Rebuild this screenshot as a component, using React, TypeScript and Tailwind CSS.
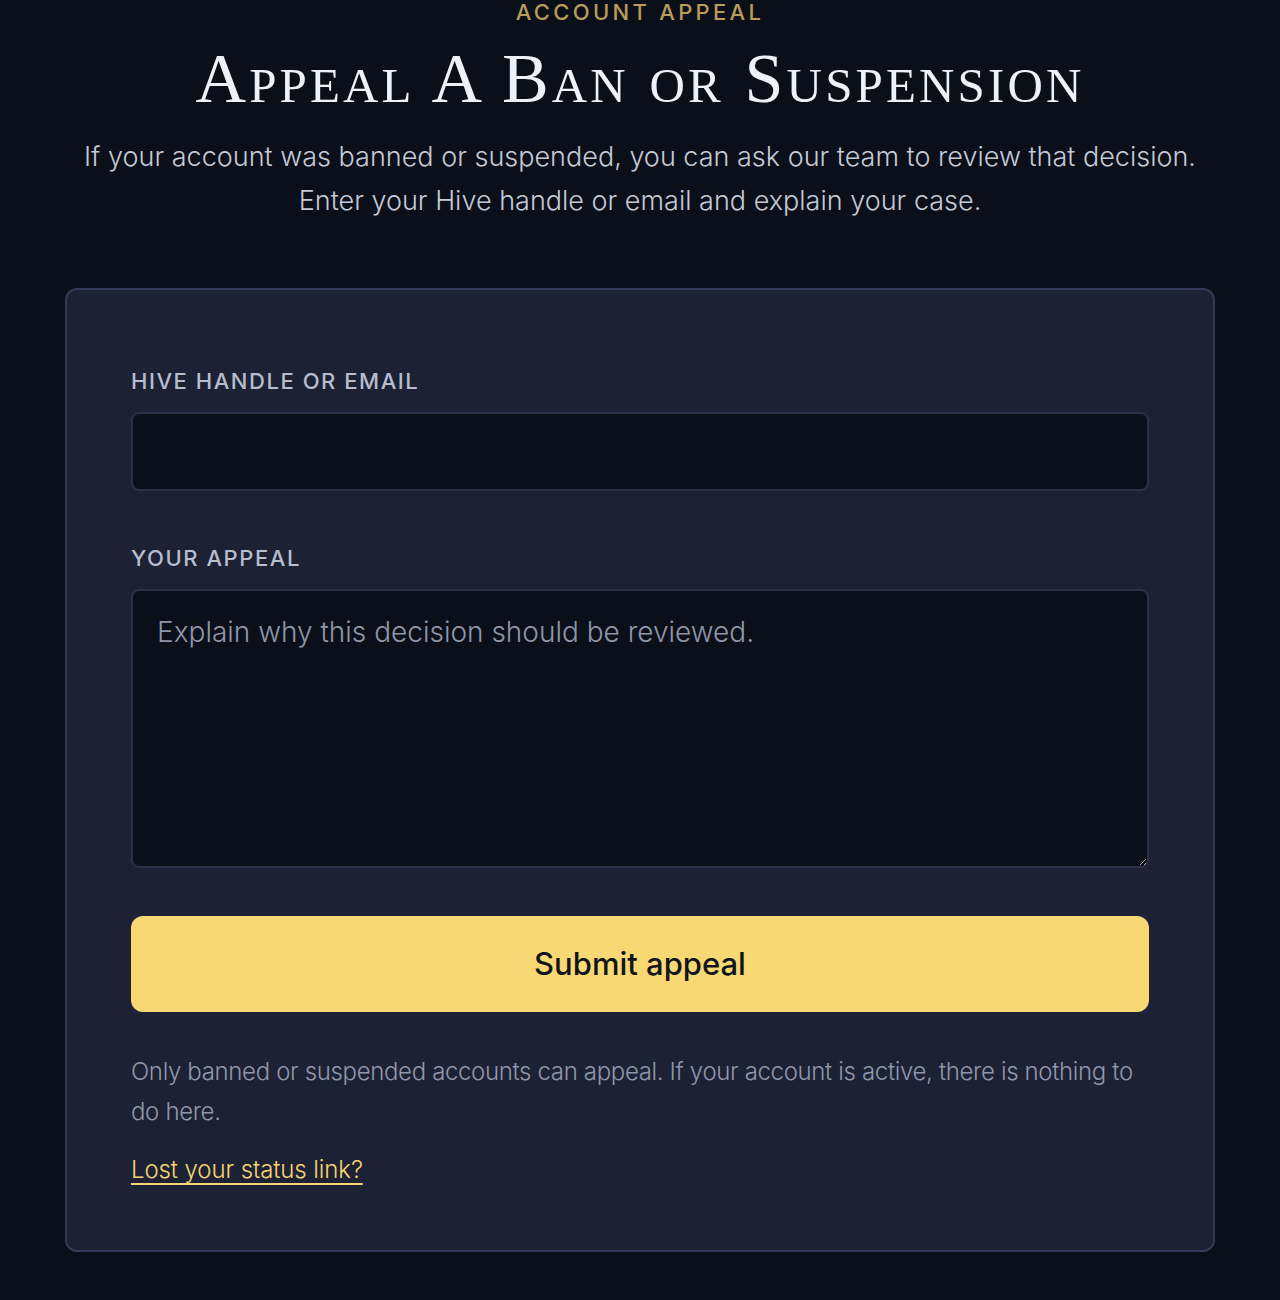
import { useState } from 'react'

export default function App() {
  const [handle, setHandle] = useState('')
  const [appeal, setAppeal] = useState('')

  return (
    <div className="min-h-[1300px] bg-[#0b0f19] font-['Inter',sans-serif] text-[#e6e9f2]">
      <div className="mx-auto flex w-[1150px] flex-col items-center">
        {/* Header */}
        <p className="-mt-[2px] text-[22px] font-medium leading-[28px] tracking-[0.15em] text-[#b89c5a]">
          ACCOUNT APPEAL
        </p>
        <h1 className="mt-[18px] font-['Liberation_Serif',serif] text-[70px] leading-[70px] tracking-[0.045em] text-[#eef1f8] [font-variant:small-caps]">
          Appeal A Ban or Suspension
        </h1>
        <p className="mt-[21px] w-[1160px] text-center text-[27px] font-light leading-[44px] text-[#c3cad8]">
          If your account was banned or suspended, you can ask our team to review that decision.
          <br />
          Enter your Hive handle or email and explain your case.
        </p>

        {/* Form card */}
        <form
          onSubmit={(e) => e.preventDefault()}
          className="mt-[65px] w-full rounded-[12px] border-2 border-[#343a58] bg-[#1d2134] px-[64px] pt-[76px] pb-[63px]"
        >
          <label className="block text-[22px] font-medium leading-[30px] tracking-[0.07em] text-[#b6bece]">
            HIVE HANDLE OR EMAIL
          </label>
          <input
            type="text"
            value={handle}
            onChange={(e) => setHandle(e.target.value)}
            className="mt-[16px] block h-[79px] w-full rounded-[8px] border-2 border-[#2c3149] bg-[#0b0f19] px-[24px] text-[28px] text-[#e6e9f2] outline-none"
          />

          <label className="mt-[52px] block text-[22px] font-medium leading-[30px] tracking-[0.07em] text-[#b6bece]">
            YOUR APPEAL
          </label>
          <textarea
            value={appeal}
            onChange={(e) => setAppeal(e.target.value)}
            placeholder="Explain why this decision should be reviewed."
            className="mt-[16px] block h-[279px] w-full rounded-[8px] border-2 border-[#2c3149] bg-[#0b0f19] px-[24px] py-[20px] text-[28px] font-light leading-[42px] text-[#e6e9f2] outline-none placeholder:text-[#8e97aa]"
          />

          <button
            type="submit"
            className="mt-[48px] block h-[96px] w-full rounded-[12px] bg-[#f8d872] text-[31px] font-medium text-[#12141c]"
          >
            Submit appeal
          </button>

          <p className="mt-[40px] text-[24px] font-light leading-[40px] tracking-[-0.35px] text-[#8f98ab]">
            Only banned or suspended accounts can appeal. If your account is active, there is nothing to do here.
          </p>
          <a href="#" className="mt-[21px] inline-block text-[24px] font-light leading-[34px] tracking-[-0.1px] text-[#f6d574] underline underline-offset-[5px]">
            Lost your status link?
          </a>
        </form>
      </div>
    </div>
  )
}
